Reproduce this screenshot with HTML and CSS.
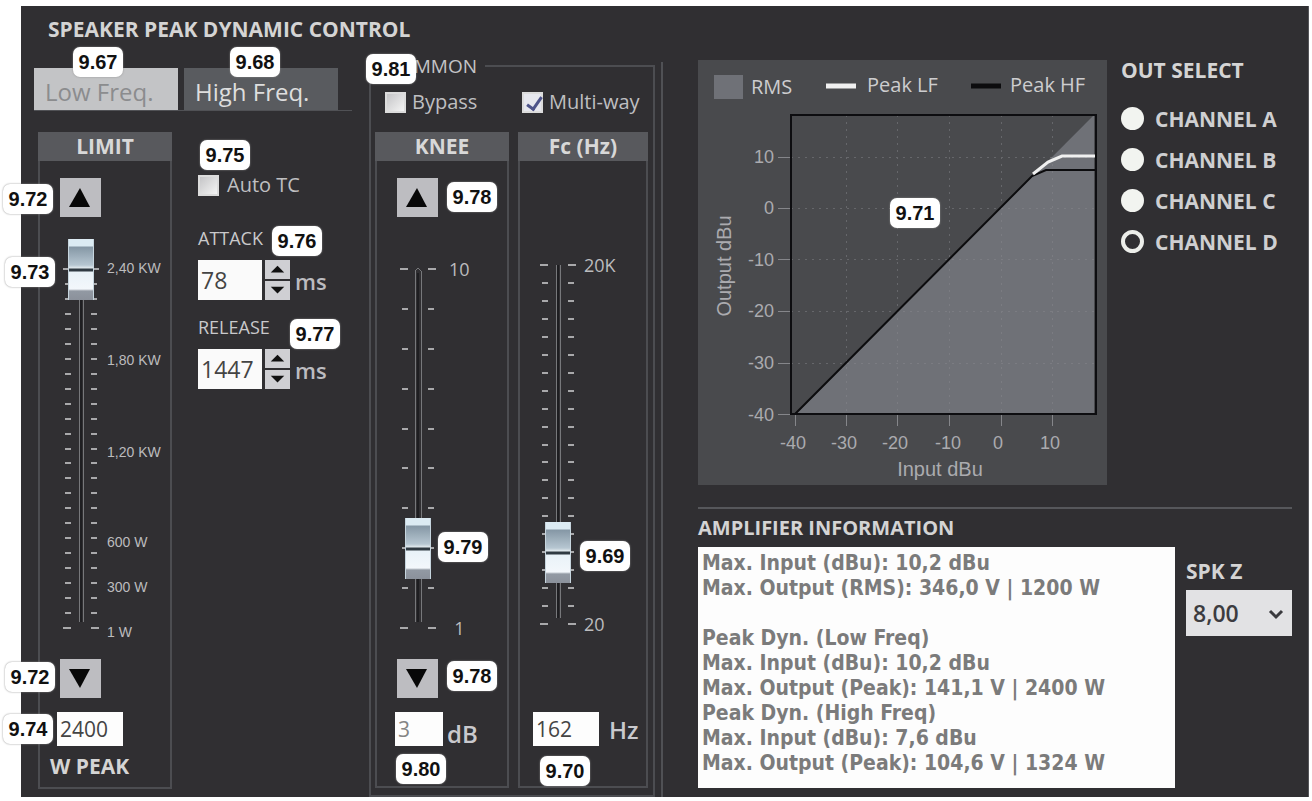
FILE: index.html
```html
<!DOCTYPE html>
<html lang="en">
<head>
<meta charset="utf-8">
<title>Speaker Peak Dynamic Control</title>
<link rel="stylesheet" href="styles.css">
</head>
<body>
<main class="panel">
  <section class="dynamics">
    <h1 class="title">SPEAKER PEAK DYNAMIC CONTROL</h1>
    <div class="dynamics-row">
      <div class="band">
        <div class="tabs" role="tablist">
          <button class="tab tab-active" role="tab" aria-selected="true">Low Freq.</button>
          <button class="tab" role="tab" aria-selected="false">High Freq.</button>
        </div>
        <div class="band-body">
          <section class="strip strip-limit">
            <h2 class="strip-head">LIMIT</h2>
            <div class="strip-body">
              <button class="step" aria-label="Increase limit"><svg viewBox="0 0 41 39"><path d="M20 10 30 29H9z"/></svg></button>
              <div class="scale">
                <div class="fader" id="limit-fader">
                  <svg class="ticks" viewBox="0 0 36 420"><path class="rail" d="M16 34V383M20 34V383"/><path class="rail-core" d="M18 34V383"/><path class="minor" d=""/><path class="major" d="M0 30h8M28 30h8M0 389h8M28 389h8"/></svg>
                  <input class="range" type="range" min="1" max="2400" value="2400" aria-label="Limit">
                </div>
                <div class="marks marks-limit"><span>2,40 KW</span><span>1,80 KW</span><span>1,20 KW</span><span>600 W</span><span>300 W</span><span>1 W</span></div>
              </div>
              <button class="step" aria-label="Decrease limit"><svg viewBox="0 0 41 39"><path d="M9 10H30L20 29z"/></svg></button>
              <div class="value-row"><input class="value value-wide" id="wpeak" type="text" value="2400"></div>
              <label class="caption" for="wpeak">W PEAK</label>
            </div>
          </section>
          <div class="timing">
            <label class="check"><input type="checkbox"><span>Auto TC</span></label>
            <label class="timing-label" for="attack">ATTACK</label>
            <div class="spin">
              <input class="spin-value" id="attack" type="text" value="78">
              <div class="spin-buttons">
                <button aria-label="Increase attack"><svg viewBox="0 0 26 19"><path d="M13 6 20 13H6z"/></svg></button>
                <button aria-label="Decrease attack"><svg viewBox="0 0 26 19"><path d="M6 6H20L13 13z"/></svg></button>
              </div>
              <span class="spin-unit">ms</span>
            </div>
            <label class="timing-label" for="release">RELEASE</label>
            <div class="spin">
              <input class="spin-value" id="release" type="text" value="1447">
              <div class="spin-buttons">
                <button aria-label="Increase release"><svg viewBox="0 0 26 19"><path d="M13 6 20 13H6z"/></svg></button>
                <button aria-label="Decrease release"><svg viewBox="0 0 26 19"><path d="M6 6H20L13 13z"/></svg></button>
              </div>
              <span class="spin-unit">ms</span>
            </div>
          </div>
        </div>
      </div>
      <fieldset class="common">
        <legend>COMMON</legend>
        <div class="checks">
          <label class="check"><input type="checkbox"><span>Bypass</span></label>
          <label class="check"><input type="checkbox" checked><span>Multi-way</span></label>
        </div>
        <div class="strips">
          <section class="strip strip-knee">
            <h2 class="strip-head">KNEE</h2>
            <div class="strip-body strip-body-knee">
              <button class="step" aria-label="Increase knee"><svg viewBox="0 0 41 39"><path d="M20 10 30 29H9z"/></svg></button>
              <div class="scale">
                <div class="fader" id="knee-fader">
                  <svg class="ticks" viewBox="0 0 36 420"><path class="rail" d="M15 383V32q3-5 6 0V383"/><path class="rail-core" d="M18 34V383"/><path class="minor" d=""/><path class="major" d="M0 30h8M28 30h8M0 389h8M28 389h8"/></svg>
                  <input class="range" type="range" min="1" max="10" value="3" aria-label="Knee">
                </div>
                <div class="marks marks-ends marks-knee"><span>10</span><span>1</span></div>
              </div>
              <button class="step" aria-label="Decrease knee"><svg viewBox="0 0 41 39"><path d="M9 10H30L20 29z"/></svg></button>
              <div class="value-row"><input class="value value-muted" id="knee" type="text" value="3"><label for="knee">dB</label></div>
            </div>
          </section>
          <section class="strip strip-fc">
            <h2 class="strip-head">Fc (Hz)</h2>
            <div class="strip-body strip-body-fc">
              <div class="scale">
                <div class="fader" id="fc-fader">
                  <svg class="ticks" viewBox="0 0 36 420"><path class="rail" d="M16 30V383M20 30V383"/><path class="rail-core" d="M18 30V383"/><path class="minor" d=""/><path class="major" d="M0 30h8M28 30h8M0 389h8M28 389h8"/></svg>
                  <input class="range" type="range" min="0" max="100" value="20" aria-label="Crossover frequency">
                </div>
                <div class="marks marks-ends"><span>20K</span><span>20</span></div>
              </div>
              <div class="value-row value-row-fc"><input class="value value-wide" id="fc" type="text" value="162"><label for="fc">Hz</label></div>
            </div>
          </section>
        </div>
      </fieldset>
    </div>
    <span class="pin p67">9.67</span>
    <span class="pin p68">9.68</span>
    <span class="pin p81">9.81</span>
    <span class="pin p72a">9.72</span>
    <span class="pin p73">9.73</span>
    <span class="pin p75">9.75</span>
    <span class="pin p76">9.76</span>
    <span class="pin p77">9.77</span>
    <span class="pin p72b">9.72</span>
    <span class="pin p74">9.74</span>
    <span class="pin p78a">9.78</span>
    <span class="pin p78b">9.78</span>
    <span class="pin p79">9.79</span>
    <span class="pin p69">9.69</span>
    <span class="pin p80">9.80</span>
    <span class="pin p70">9.70</span>
  </section>

  <section class="monitor">
    <div class="monitor-top">
      <div class="chart">
        <svg viewBox="0 0 409 425" role="img" aria-label="Output level against input level">
          <rect class="rms" x="16" y="15" width="29" height="24"/>
          <path class="peak-lf" stroke-width="5" d="M128 26h30"/>
          <path class="peak-hf" stroke-width="5" d="M273 26h30"/>
          <text class="legend-text" x="53" y="34">RMS</text>
          <text class="legend-text" x="169" y="32">Peak LF</text>
          <text class="legend-text" x="312" y="32">Peak HF</text>
          <path class="rms" d="M98 354 396 55V354z"/>
          <path class="grid" d="M148 55V354M199 55V354M251 55V354M303 55V354M354 55V354M93 97H398M93 148H398M93 199H398M93 251H398M93 303H398"/>
          <path class="axis-tick" d="M80 97h12M80 148h12M80 199h12M80 251h12M80 303h12M80 354h12M97 355v11M148 355v11M199 355v11M251 355v11M303 355v11M354 355v11"/>
          <path class="peak-hf" stroke-width="2" d="M97 354 334 116 348 110H398"/>
          <path class="peak-lf" stroke-width="3" d="M335 114 350 102 364 96H398"/>
          <rect class="frame" x="93" y="55" width="305" height="299"/>
          <g class="axis-text axis-y">
            <text x="76" y="103">10</text><text x="76" y="154">0</text><text x="76" y="206">-10</text><text x="76" y="257">-20</text><text x="76" y="309">-30</text><text x="76" y="361">-40</text>
          </g>
          <g class="axis-text axis-x">
            <text x="95" y="389">-40</text><text x="146" y="389">-30</text><text x="197" y="389">-20</text><text x="250" y="389">-10</text><text x="300" y="389">0</text><text x="352" y="389">10</text>
            <text class="axis-name" x="242" y="416">Input dBu</text>
            <text class="axis-name" transform="translate(33 206) rotate(-90)">Output dBu</text>
          </g>
        </svg>
        <span class="pin p71">9.71</span>
      </div>
      <fieldset class="outputs">
        <legend>OUT SELECT</legend>
        <label><input type="radio" name="out"><span>CHANNEL A</span></label>
        <label><input type="radio" name="out"><span>CHANNEL B</span></label>
        <label><input type="radio" name="out"><span>CHANNEL C</span></label>
        <label><input type="radio" name="out" checked><span>CHANNEL D</span></label>
      </fieldset>
    </div>
    <div class="amp">
      <div class="amp-main">
        <label class="amp-title" for="info">AMPLIFIER INFORMATION</label>
        <textarea class="info" id="info" readonly>Max. Input (dBu): 10,2 dBu
Max. Output (RMS): 346,0 V | 1200 W

Peak Dyn. (Low Freq)
Max. Input (dBu): 10,2 dBu
Max. Output (Peak): 141,1 V | 2400 W
Peak Dyn. (High Freq)
Max. Input (dBu): 7,6 dBu
Max. Output (Peak): 104,6 V | 1324 W</textarea>
      </div>
      <div class="load">
        <label for="spkz">SPK Z</label>
        <div class="select-box">
          <select id="spkz"><option>8,00</option></select>
          <svg class="chevron" viewBox="0 0 16 12"><path d="M2 3 8 9 14 3"/></svg>
        </div>
      </div>
    </div>
  </section>
</main>
<script src="ticks.js"></script>
</body>
</html>
```
FILE: ticks.js
```js
// Draws the minor graduations between the two end marks of a fader.
function drawTicks(id, steps) {
  let d = "";
  for (let i = 1; i < steps; i++) {
    const y = Math.round(30 + (359 * i) / steps);
    d += `M2 ${y}h6M28 ${y}h6`;
  }
  document.querySelector(`#${id} .minor`).setAttribute("d", d);
}
drawTicks("limit-fader", 24);
drawTicks("knee-fader", 9);
drawTicks("fc-fader", 20);
```
FILE: styles.css
```css
* { box-sizing: border-box; }

body {
  margin: 0;
  padding: 6px 3px 4px 21px;
  background: #fff;
  color: #d4d4d4;
  font-family: "Open Sans", "Noto Sans", sans-serif;
}

button, input, select, textarea { font: inherit; margin: 0; border: 0; border-radius: 0; padding: 0; }
h1, h2 { margin: 0; }
svg { display: block; }

.panel {
  display: grid;
  grid-template-columns: 642px 1fr;
  background: #302f32;
  border-right: 1px solid #55565a;
}

.dynamics { position: relative; padding-top: 11px; }
.title { padding-left: 27px; font-size: 21px; line-height: 24px; font-weight: 700; }
.dynamics-row {
  display: flex;
  margin-top: 21px;
  border-right: 2px solid #505155;
}

.band { width: 348px; padding: 6px 0 0 13px; }
.tabs { display: flex; gap: 6px; width: 318px; border-bottom: 1px solid #505155; }
.tab {
  width: 154px;
  height: 42px;
  padding: 6px 0 0 11px;
  background: #595b5f;
  color: #dedede;
  font-size: 24px;
  line-height: 30px;
  text-align: left;
}
.tab-active { width: 144px; background: #c3c4c6; color: #8b8c8e; }
.band-body { display: flex; gap: 26px; margin-top: 21px; padding-left: 4px; }

.strip { width: 134px; border: 2px solid #4c4d51; border-top: 0; }
.strip-head {
  margin: 0 -2px;
  background: #58595d;
  color: #d8d8d8;
  font-size: 21px;
  line-height: 29px;
  font-weight: 700;
  text-align: center;
}
.strip-body { padding: 17px 0 9px 20px; }
.strip-body-knee { padding-bottom: 40px; }
.strip-fc { width: 130px; }
.strip-body-fc { padding: 74px 0 0 13px; }

.step { display: block; width: 41px; height: 39px; background: #bdbdc1; fill: #080808; }
.scale { display: flex; gap: 8px; margin-top: 22px; margin-left: 3px; }
.strip-body-fc .scale { margin-top: 0; margin-left: 7px; }
.fader { position: relative; width: 36px; height: 420px; }
.ticks { width: 36px; height: 420px; fill: none; shape-rendering: crispEdges; }
.minor, .major { stroke: #a9a9ab; stroke-width: 2; }
.rail { stroke: #77787b; }
.rail-core { stroke: #1e1e21; stroke-width: 2; }

.range {
  position: absolute;
  inset: 0;
  width: 36px;
  height: 420px;
  appearance: none;
  background: none;
  writing-mode: vertical-lr;
  direction: rtl;
}
.range::-webkit-slider-runnable-track { background: none; width: 36px; }
.range::-webkit-slider-thumb {
  appearance: none;
  width: 26px;
  height: 61px;
  margin-left: 5px;
  background: linear-gradient(#dcebf3 0 7px, #8597a5 8px, #b6c6d1 26px, #e2eaee 29px, #303a42 30px 32px, #e9f2f8 33px, #f3f7fb 50px, #9299a3 52px, #8b919b 61px);
  border: solid #c6d5de;
  border-width: 0 1px;
}

.marks { display: grid; font-size: 14px; line-height: 20px; white-space: nowrap; color: #bcbcbe; font-family: "Liberation Sans", Arial, sans-serif; }
.marks-limit { align-content: start; padding-top: 19px; grid-template-rows: 92px 92px 90px 45px 45px 20px; }
.marks-ends { align-content: space-between; padding: 20px 0 21px; font-size: 18px; font-family: "Open Sans", sans-serif; }
.marks-knee { padding-left: 5px; text-align: center; }

.value-row { display: flex; align-items: flex-start; gap: 4px; margin-top: 14px; font-size: 24px; line-height: 44px; height: 34px; margin-left: -2px; }
.value-row label { font-weight: 600; color: #c9c9cd; }
.value { width: 48px; height: 34px; padding: 0 3px; background: #fdfdfd; color: #444; font-size: 21px; line-height: 34px; }
.value-wide { width: 66px; }
.value-muted { color: #858585; }
.strip-limit .value-row { margin-left: -3px; }
.value-row-fc { margin: 57px 0 0; gap: 10px; line-height: 36px; }
.caption { display: block; margin: 8px 0 0 -10px; font-size: 21px; line-height: 24px; font-weight: 700; }

.timing { padding-top: 42px; }
.check { display: flex; align-items: center; gap: 8px; height: 22px; font-size: 20px; line-height: 22px; color: #bfbfc1; }
.check input { appearance: none; width: 21px; height: 21px; background: linear-gradient(135deg, #c5c5c7, #f4f4f4); border: 2px solid #dcdcdc; }
.check input:checked { position: relative; background: #e6e7ee; }
.check input:checked::after {
  content: "";
  position: absolute;
  left: 6px;
  top: 0;
  width: 6px;
  height: 13px;
  border: solid #4d5389;
  border-width: 0 3px 3px 0;
  transform: rotate(35deg);
}
.timing-label { display: block; margin-top: 30px; font-size: 18px; line-height: 24px; color: #c9c9cb; }
.spin + .timing-label { margin-top: 15px; }
.spin { display: flex; gap: 3px; margin-top: 10px; height: 40px; }
.spin-value { width: 64px; padding: 0 3px; background: #fafafa; color: #444; font-size: 23px; }
.spin-buttons { display: grid; gap: 2px; }
.spin-buttons button { width: 25px; height: 19px; background: #cfcfd3; fill: #111; }
.spin-unit { padding-left: 2px; font-size: 22px; line-height: 42px; font-weight: 600; color: #bcbcc0; }

.common { width: 286px; min-width: 0; margin: -7px 0 0 0; padding: 14px 4px 7px; border: 2px solid #4c4d51; }
.common legend { margin-left: 4px; padding: 0 8px; font-size: 19px; line-height: 22px; color: #c4c4c6; }
.checks { display: flex; height: 22px; padding-left: 10px; }
.checks .check:first-child { width: 137px; }
.checks .check { gap: 6px; }
.strips { display: flex; gap: 9px; margin-top: 19px; }

.pin {
  position: absolute;
  width: 50px;
  height: 30px;
  border-radius: 7px;
  background: #fff;
  color: #111;
  font: 700 20px/30px "Liberation Sans", Arial, sans-serif;
  text-align: center;
  box-shadow: 0 0 2px #8c8c8c;
}
.p67 { left: 52px; top: 41px; }
.p68 { left: 209px; top: 41px; }
.p81 { left: 345px; top: 48px; }
.p72a { left: -18px; top: 178px; }
.p73 { left: -16px; top: 251px; }
.p75 { left: 179px; top: 134px; }
.p76 { left: 251px; top: 220px; }
.p77 { left: 269px; top: 313px; }
.p72b { left: -16px; top: 656px; }
.p74 { left: -18px; top: 708px; }
.p78a { left: 426px; top: 176px; }
.p78b { left: 426px; top: 655px; }
.p79 { left: 417px; top: 526px; }
.p69 { left: 559px; top: 535px; }
.p80 { left: 375px; top: 748px; }
.p70 { left: 519px; top: 750px; }
.p71 { left: 192px; top: 138px; }

.monitor { display: flex; flex-direction: column; padding: 54px 16px 9px 35px; }
.monitor-top { display: flex; gap: 14px; padding-bottom: 22px; border-bottom: 2px solid #56575b; }
.chart { position: relative; width: 409px; background: #494a4d; }
.chart svg { width: 100%; }
.rms { fill: #6f7177; }
.peak-lf { fill: none; stroke: #f0f0f0; }
.peak-hf { fill: none; stroke: #0c0c0e; }
.grid { stroke: #8a8b90; stroke-dasharray: 2 5; opacity: .45; shape-rendering: crispEdges; }
.axis-tick { stroke: #85868a; shape-rendering: crispEdges; }
.frame { fill: none; stroke: #0d0d10; stroke-width: 2; shape-rendering: crispEdges; }
.legend-text { fill: #cdcdcf; font-size: 20px; }
.axis-text { fill: #ababaf; font: 18px "Liberation Sans", Arial, sans-serif; }
.axis-name { font-size: 20px; }
.axis-y { text-anchor: end; }
.axis-x { text-anchor: middle; }

.outputs { flex: 1; min-width: 0; margin: 0; padding: 0; border: 0; }
.outputs legend { padding: 0; margin-bottom: 18px; font-size: 21px; line-height: 20px; font-weight: 700; white-space: nowrap; }
.outputs label { display: flex; align-items: center; gap: 11px; height: 41px; font-size: 21px; font-weight: 700; color: #cfcfd1; white-space: nowrap; }
.outputs input { appearance: none; flex: none; width: 23px; height: 23px; border-radius: 50%; background: #f2f4f0; }
.outputs input:checked { background: none; border: 4px solid #eceeea; }

.amp { display: grid; grid-template-columns: 477px 1fr; column-gap: 11px; flex: 1; }
.amp-main { display: flex; flex-direction: column; }
.amp-title { margin-top: 7px; padding-bottom: 7px; font-size: 20px; line-height: 24px; font-weight: 700; }
.info {
  flex: 1;
  min-height: 241px;
  padding: 4px;
  overflow: hidden;
  resize: none;
  background: #fdfdfd;
  color: #7b7b7b;
  font: 700 21px/25px "DejaVu Sans Condensed", "Noto Sans", sans-serif;
}
.load { padding-top: 50px; font-weight: 600; }
.load label { display: block; font-size: 21px; line-height: 24px; font-weight: 700; }
.select-box { position: relative; margin-top: 7px; }
.select-box select { appearance: none; width: 100%; height: 46px; padding-left: 7px; background: #e2e2e4; color: #3c3c40; font-size: 23px; font-weight: 600; }
.chevron { position: absolute; right: 8px; top: 18px; width: 16px; height: 12px; fill: none; stroke: #3a3a3e; stroke-width: 3; pointer-events: none; }
```
